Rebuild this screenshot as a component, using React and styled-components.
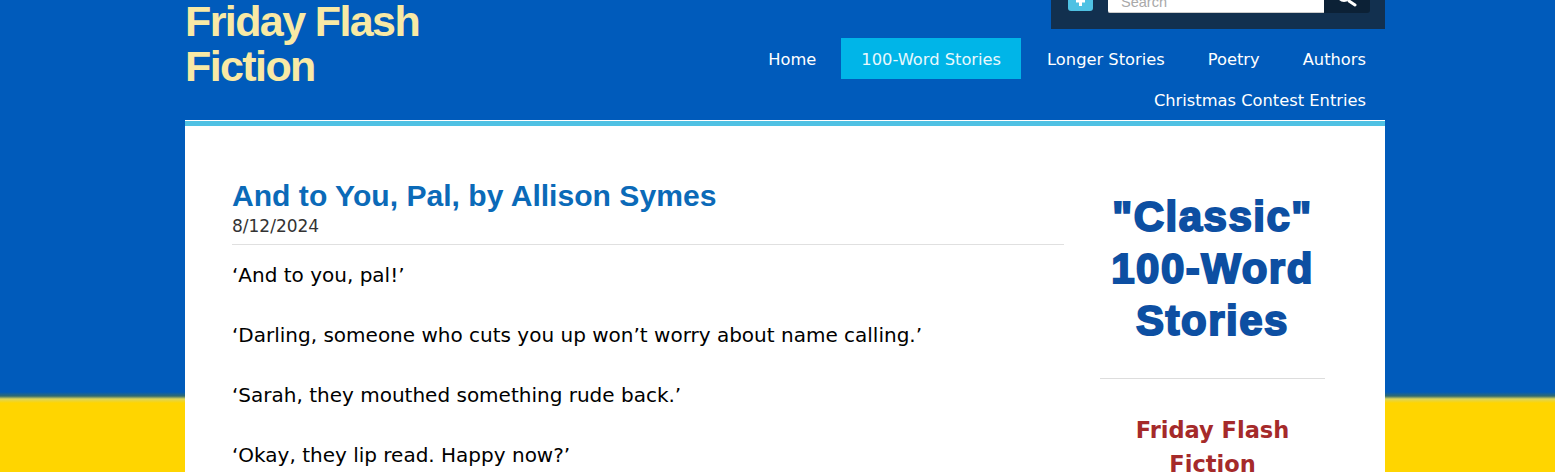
import React from 'react';
import styled, { createGlobalStyle } from 'styled-components';

const GlobalStyle = createGlobalStyle`
  html, body {
    margin: 0;
    height: 472px;
    overflow: hidden;
    background: linear-gradient(to bottom, #005bbb 0, #005bbb 392px, #2f6a70 396px, #dcd55a 399px, #ffd500 403px, #ffd500 100%);
  }
`;

const Page = styled.div`
  width: 1200px;
  margin-left: 185px;
  height: 472px;
  overflow: hidden;
  font-family: "DejaVu Sans", Verdana, sans-serif;
`;

const Header = styled.header`
  display: flex;
  justify-content: space-between;
  height: 120px;
`;

const SiteTitle = styled.div`
  width: 300px;
  margin-top: -1px;
  font-family: "Liberation Sans", Arial, sans-serif;
  font-weight: bold;
  font-size: 43px;
  line-height: 45px;
  letter-spacing: -1.6px;
  color: #f8e9a5;
`;

const HeaderRight = styled.div`
  display: flex;
  flex-direction: column;
  align-items: flex-end;
`;

const SearchBar = styled.div`
  display: flex;
  align-items: flex-end;
  width: 334px;
  height: 29px;
  padding: 0 15px 16px 17px;
  box-sizing: border-box;
  background: #12304f;
`;

const SocialIcon = styled.div`
  display: flex;
  justify-content: center;
  align-items: flex-start;
  width: 25px;
  height: 28px;
  margin: 0 15px 2px 0;
  border-radius: 3px;
  background: #4fc1e3;
  flex: none;
  overflow: hidden;
`;

const SearchInput = styled.div`
  flex: 1;
  height: 30px;
  display: flex;
  align-items: flex-end;
  padding: 0 0 0 13px;
  background: #fff;
  border-bottom: 1px solid #ccc;
  border-radius: 2px 0 0 2px;
  font-family: "Liberation Sans", Arial, sans-serif;
  font-size: 14.5px;
  line-height: 20px;
  color: #a9a9a9;
  box-sizing: border-box;
`;

const SearchButton = styled.div`
  display: flex;
  justify-content: center;
  align-items: flex-end;
  flex: none;
  width: 46px;
  height: 30px;
  background: #0c2136;
  border-radius: 0 3px 3px 0;
`;

const Nav = styled.nav`
  display: flex;
  flex-wrap: wrap;
  justify-content: flex-end;
  margin-top: 9px;
  width: 660px;
`;

const NavLink = styled.a`
  display: block;
  height: 41px;
  padding: 0 ${({ $active }) => ($active ? '20px' : '19px')};
  margin: ${({ $active }) => ($active ? '0 2px 0 6px' : '0 0 0 5px')};
  font-size: 16.3px;
  line-height: 43px;
  color: ${({ $active }) => ($active ? '#e8f8fd' : '#fff')};
  background: ${({ $active }) => ($active ? '#00b5e8' : 'transparent')};
`;

const Strip = styled.div`
  height: 5px;
  border-top: 1px solid #fff;
  background: #4fc1e3;
`;

const Content = styled.main`
  display: flex;
  padding: 47px 60px 0 47px;
  background: #fff;
  height: 346px;
`;

const Article = styled.article`
  width: 832px;
  flex: none;
`;

const PostTitle = styled.h2`
  margin: 0 0 -1px;
  padding-top: 1px;
  font-family: "Liberation Sans", Arial, sans-serif;
  font-size: 30.1px;
  font-weight: bold;
  line-height: 44px;
  color: #0b6ab8;
`;

const PostDate = styled.div`
  padding-bottom: 8px;
  border-bottom: 1px solid #e0e0e0;
  font-size: 17px;
  line-height: 19px;
  color: #333;
`;

const Paragraph = styled.p`
  margin: 0;
  height: 60px;
  font-size: 20px;
  line-height: 60px;
  color: #000;
`;

const Sidebar = styled.aside`
  width: 225px;
  margin-left: auto;
  padding-top: 18px;
  text-align: center;
`;

const SidebarHeading = styled.h2`
  margin: 0;
  padding-bottom: 31px;
  border-bottom: 1px solid #ddd;
  font-family: "Liberation Sans", Arial, sans-serif;
  font-size: 42px;
  font-weight: bold;
  line-height: 52px;
  letter-spacing: 1.5px;
  -webkit-text-stroke: 2px #0d4fa2;
  color: #0d4fa2;
`;

const SidebarName = styled.h3`
  margin: 34px 0 0;
  font-size: 22.5px;
  font-weight: bold;
  line-height: 34px;
  color: #a52a2a;
`;

const lines = [
  '‘And to you, pal!’',
  '‘Darling, someone who cuts you up won’t worry about name calling.’',
  '‘Sarah, they mouthed something rude back.’',
  '‘Okay, they lip read. Happy now?’',
];

const navItems = ['Home', '100-Word Stories', 'Longer Stories', 'Poetry', 'Authors', 'Christmas Contest Entries'];

export default function App() {
  return (
    <Page>
      <GlobalStyle />
      <Header>
        <SiteTitle>Friday Flash<br />Fiction</SiteTitle>
        <HeaderRight>
          <SearchBar>
            <SocialIcon>
              <svg width="25" height="28" viewBox="0 0 25 28" fill="#fff">
                <path d="M11 23v-3.500H8V17h3v-3h3v3h3v2.500h-3V23z" />
              </svg>
            </SocialIcon>
            <SearchInput>Search</SearchInput>
            <SearchButton>
              <svg width="24" height="14" viewBox="0 0 24 14" fill="none" stroke="#fff">
                <circle cx="9" cy="-4" r="6" strokeWidth="2" />
                <path d="M14 2L20 6" strokeWidth="3" strokeLinecap="round" />
              </svg>
            </SearchButton>
          </SearchBar>
          <Nav>
            {navItems.map((item) => (
              <NavLink key={item} $active={item === '100-Word Stories'}>{item}</NavLink>
            ))}
          </Nav>
        </HeaderRight>
      </Header>
      <Strip />
      <Content>
        <Article>
          <PostTitle>And to You, Pal, by Allison Symes</PostTitle>
          <PostDate>8/12/2024</PostDate>
          {lines.map((line) => <Paragraph key={line}>{line}</Paragraph>)}
        </Article>
        <Sidebar>
          <SidebarHeading>"Classic" 100-Word Stories</SidebarHeading>
          <SidebarName>Friday Flash Fiction</SidebarName>
        </Sidebar>
      </Content>
    </Page>
  );
}
